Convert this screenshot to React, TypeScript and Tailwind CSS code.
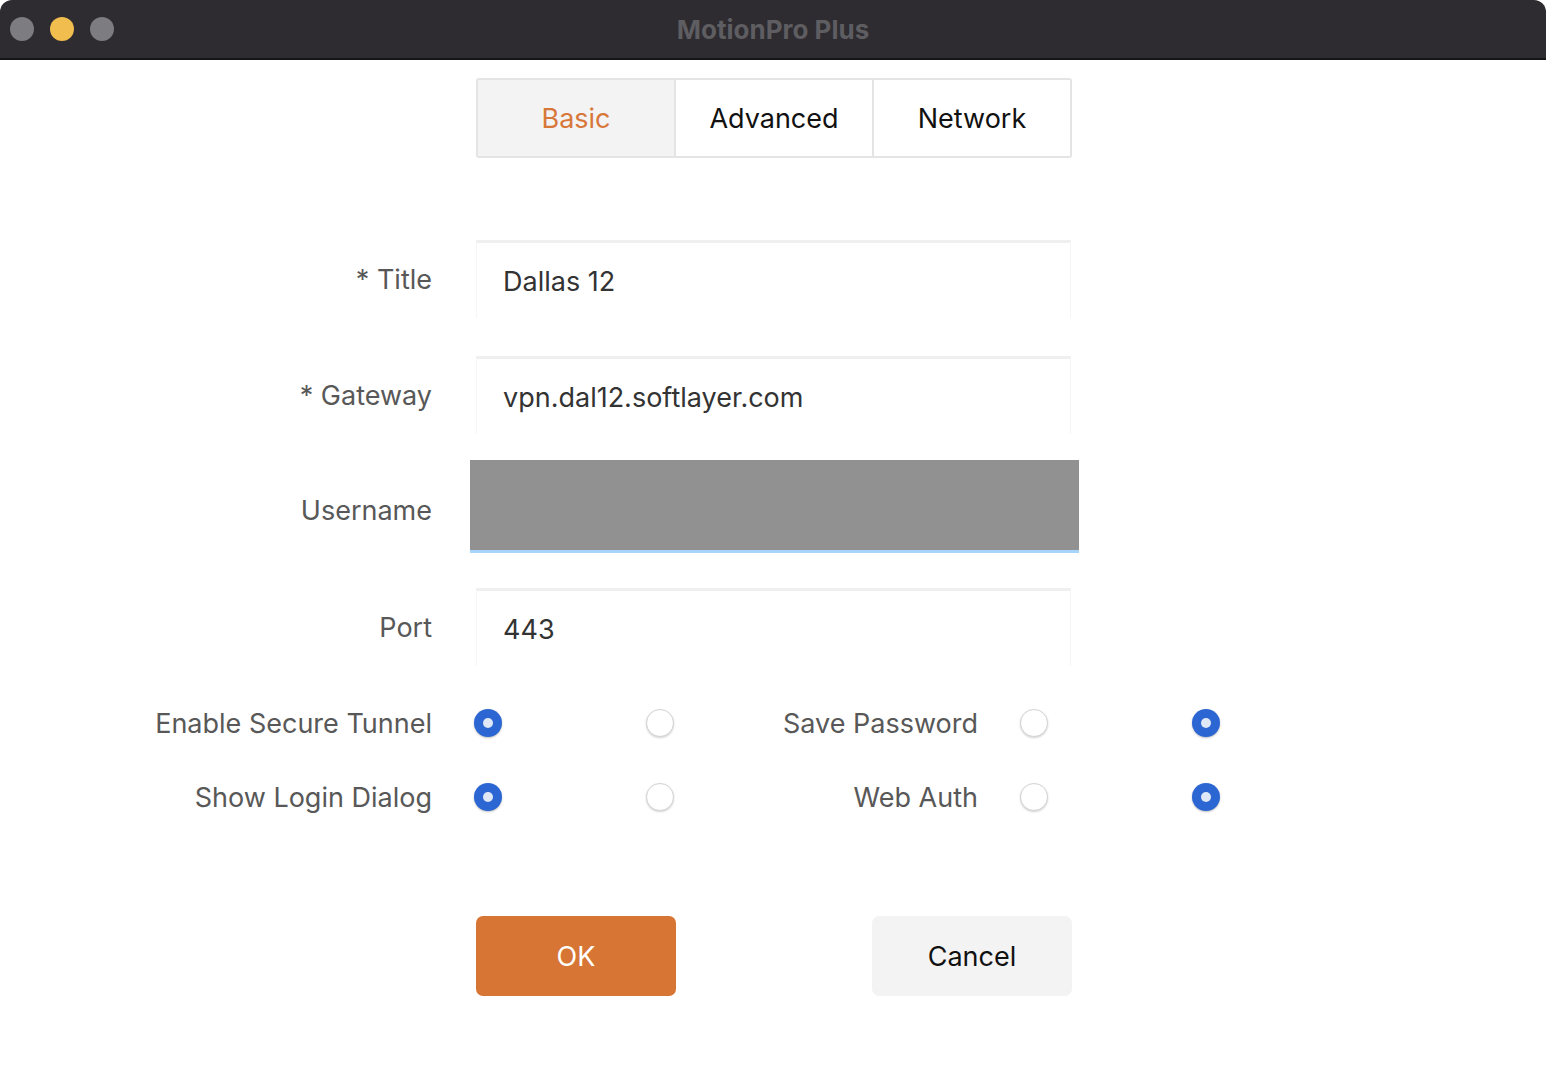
import React from 'react';

const font = { fontFamily: 'Inter, "Noto Sans", sans-serif' };

function Radio({ checked }: { checked?: boolean }) {
    if (checked) {
        return (
            <span className="flex h-[28px] w-[28px] items-center justify-center rounded-full bg-[#2c66d3] shadow-[0_1px_2px_rgba(0,0,0,0.25)]">
                <span className="h-[10px] w-[10px] rounded-full bg-[#dfe8f7]" />
            </span>
        );
    }
    return <span className="block h-[28px] w-[28px] rounded-full border border-[#d4d4d4] bg-white shadow-[0_1px_2px_rgba(0,0,0,0.18)]" />;
}

function Field({ label, value, className }: { label: string; value: string; className?: string }) {
    return (
        <div className={'flex items-center ' + (className ?? '')}>
            <div className="w-[432px] pt-[2px] text-right text-[27px] text-[#585858]">{label}</div>
            <div className="ml-[44px] flex h-[78px] w-[595px] items-center border-t-[3px] border-l border-r border-t-[#efefef] border-l-[#f6f6f6] border-r-[#f6f6f6] bg-white pl-[26px] pt-[3px] text-[27px] text-[#333]">
                {value}
            </div>
        </div>
    );
}

function ToggleRow({ left, right, className }: { left: string; right: string; className?: string }) {
    return (
        <div className={'flex h-[28px] items-center ' + (className ?? '')}>
            <div className="w-[432px] pt-[3px] text-right text-[27px] text-[#585858]">{left}</div>
            <div className="ml-[42px]"><Radio checked /></div>
            <div className="ml-[144px]"><Radio /></div>
            <div className="w-[304px] pt-[3px] text-right text-[27px] text-[#585858]">{right}</div>
            <div className="ml-[42px]"><Radio /></div>
            <div className="ml-[144px]"><Radio checked /></div>
        </div>
    );
}

export default function App() {
    const tabs = ['Basic', 'Advanced', 'Network'];
    return (
        <div className="h-[1074px] w-[1546px] overflow-hidden bg-white" style={font}>
            {/* title bar */}
            <div className="relative flex h-[60px] items-center rounded-t-[12px] border-b-2 border-[#151515] bg-[#2e2c30]">
                <div className="ml-[10px] flex gap-[16px]">
                    <span className="h-[24px] w-[24px] rounded-full bg-[#7d7c80]" />
                    <span className="h-[24px] w-[24px] rounded-full bg-[#f1bd4e]" />
                    <span className="h-[24px] w-[24px] rounded-full bg-[#7d7c80]" />
                </div>
                <div className="absolute inset-x-0 top-[10px] text-center text-[26px] font-bold text-[#5e5d61]">MotionPro Plus</div>
            </div>

            {/* tabs */}
            <div className="ml-[476px] mt-[18px] flex h-[80px] w-[596px] rounded-[3px] border-2 border-[#e4e4e4]">
                {tabs.map((t, i) => (
                    <div
                        key={t}
                        className={
                            'flex flex-1 items-center justify-center pt-[2px] text-[27px] ' +
                            (i > 0 ? 'border-l-2 border-[#e4e4e4] ' : '') +
                            (i === 0 ? 'bg-[#f3f3f3] text-[#d8773a]' : 'bg-white text-[#111]')
                        }
                    >
                        {t}
                    </div>
                ))}
            </div>

            <Field label="* Title" value="Dallas 12" className="mt-[82px]" />
            <Field label="* Gateway" value="vpn.dal12.softlayer.com" className="mt-[38px]" />

            <div className="mt-[26px] flex items-center">
                <div className="w-[432px] pt-[10px] text-right text-[27px] text-[#585858]">Username</div>
                <div className="ml-[38px] h-[93px] w-[609px] border-b-[3px] border-[#a7d4fa] bg-[#919191]" />
            </div>

            <Field label="Port" value="443" className="mt-[35px]" />

            <ToggleRow left="Enable Secure Tunnel" right="Save Password" className="mt-[43px]" />
            <ToggleRow left="Show Login Dialog" right="Web Auth" className="mt-[46px]" />

            <div className="ml-[476px] mt-[105px] flex gap-[196px]">
                <button className="flex h-[80px] w-[200px] items-center justify-center rounded-[7px] bg-[#d67534] pt-[2px] text-[27px] text-white">OK</button>
                <button className="flex h-[80px] w-[200px] items-center justify-center rounded-[7px] bg-[#f3f3f3] pt-[2px] text-[27px] text-[#111]">Cancel</button>
            </div>
        </div>
    );
}
